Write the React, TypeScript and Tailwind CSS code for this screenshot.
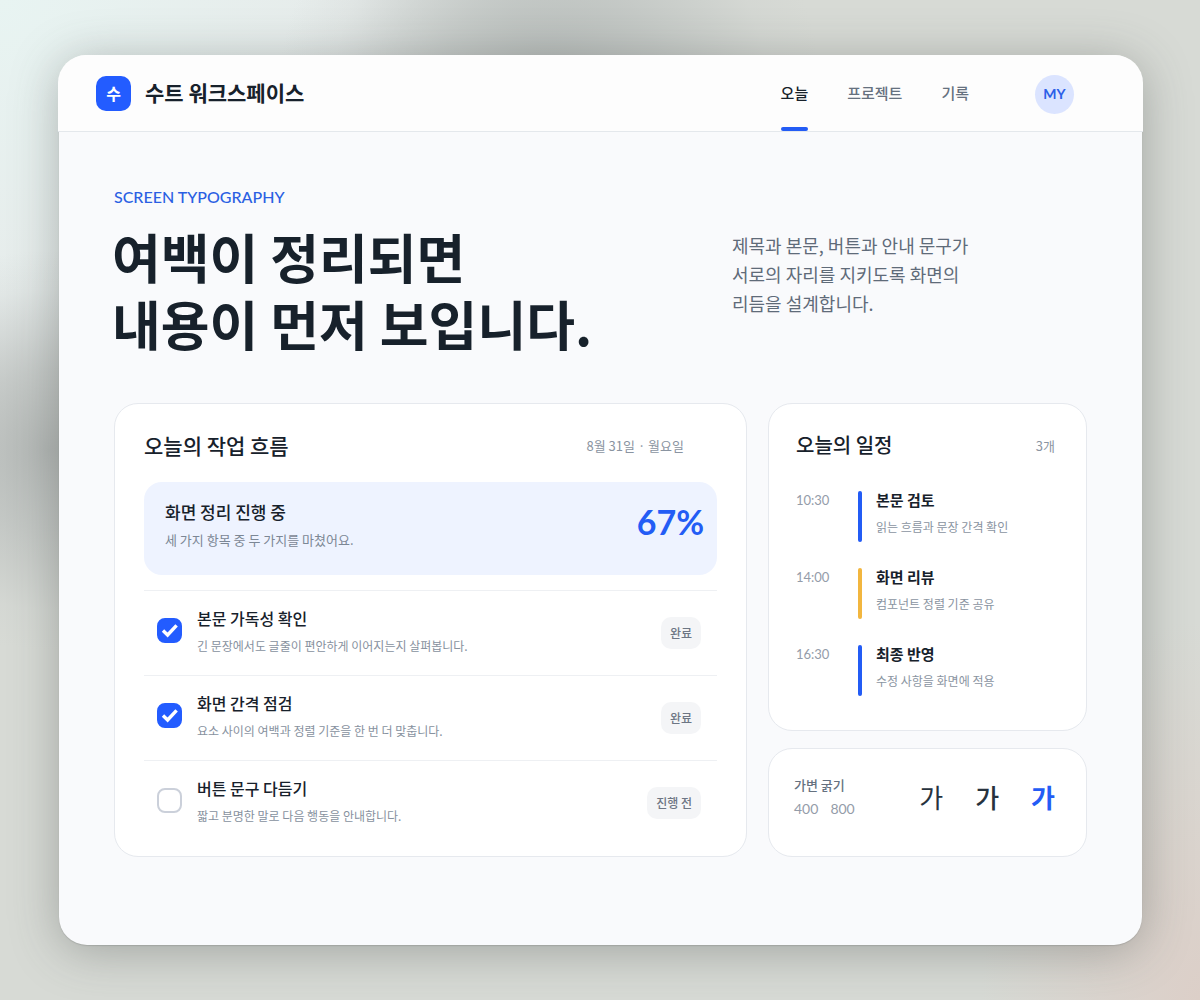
import { useState } from "react";
import clsx from "clsx";

const navItems = [
  { label: "오늘", active: true },
  { label: "프로젝트", active: false },
  { label: "기록", active: false },
];

const initialTasks = [
  { id: "readability", title: "본문 가독성 확인", desc: "긴 문장에서도 글줄이 편안하게 이어지는지 살펴봅니다.", status: "완료", done: true },
  { id: "spacing", title: "화면 간격 점검", desc: "요소 사이의 여백과 정렬 기준을 한 번 더 맞춥니다.", status: "완료", done: true },
  { id: "copy", title: "버튼 문구 다듬기", desc: "짧고 분명한 말로 다음 행동을 안내합니다.", status: "진행 전", done: false },
];

const events = [
  { time: "10:30", title: "본문 검토", desc: "읽는 흐름과 문장 간격 확인", bar: "bg-[#235cf5]" },
  { time: "14:00", title: "화면 리뷰", desc: "컴포넌트 정렬 기준 공유", bar: "bg-[#f2b63f]" },
  { time: "16:30", title: "최종 반영", desc: "수정 사항을 화면에 적용", bar: "bg-[#235cf5]" },
];

const Header = () => (
  <header className="-mx-px flex h-[77px] items-stretch justify-between rounded-t-[28px] border-b border-[#e4e8ec] bg-[#fdfdfd] pl-[38px] pr-[69px]">
    <div className="flex items-center gap-[14px]">
      <div className="flex size-[35px] items-center justify-center rounded-[10px] bg-[#235cff] text-base font-bold text-white">수</div>
      <span className="text-[21px] font-bold text-[#17212b]">수트 워크스페이스</span>
    </div>
    <div className="flex items-center gap-[66px]">
      <nav className="flex gap-[39px] self-stretch text-[15px] font-medium">
        {navItems.map((item) => (
          <a
            key={item.label}
            href="#"
            className={clsx("flex flex-col", item.active ? "text-[#17212b]" : "text-[#66717f]")}
          >
            <span className="flex flex-1 items-center pt-1">{item.label}</span>
            <span className={clsx("h-1 rounded-full", item.active && "bg-[#235cf5]")} />
          </a>
        ))}
      </nav>
      <button className="mt-0.5 size-[39px] rounded-full bg-[#dbe4ff] font-[Lato] text-sm font-bold text-[#2c5fe8]">MY</button>
    </div>
  </header>
);

const Hero = () => (
  <section className="grid grid-cols-[633fr_319fr] gap-x-[21px]">
    <div>
      <p className="font-[Lato] text-base leading-6 font-medium text-[#2b5fe3]">SCREEN TYPOGRAPHY</p>
      <h1 className="mt-[14px] -ml-0.5 text-[53px] leading-[67px] font-bold whitespace-nowrap text-[#17212b]">
        여백이 정리되면
        <br />
        내용이 먼저 보입니다.
      </h1>
    </div>
    <p className="-ml-9 pt-[46px] text-lg leading-[29px] text-[#5f6b79]">
      제목과 본문, 버튼과 안내 문구가
      <br />
      서로의 자리를 지키도록 화면의
      <br />
      리듬을 설계합니다.
    </p>
  </section>
);

const TaskCard = () => {
  const [tasks, setTasks] = useState(initialTasks);

  const toggle = (id: string) =>
    setTasks((prev) => prev.map((t) => (t.id === id ? { ...t, done: !t.done, status: t.done ? "진행 전" : "완료" } : t)));

  return (
    <section className="rounded-3xl border border-[#e6e9ee] bg-white px-[29px] pt-[25px] pb-[11px]">
      <div className="flex items-center justify-between pr-[33px]">
        <h2 className="text-[21px] leading-8 font-medium text-[#17212b]">오늘의 작업 흐름</h2>
        <time className="pt-0.5 text-[13px] text-[#8a94a1]">8월 31일 · 월요일</time>
      </div>

      <div className="mt-[21px] flex h-[93px] justify-between rounded-[18px] bg-[#eef3ff] pt-4 pr-[13px] pl-[21px]">
        <div>
          <h3 className="text-[17px] leading-7 font-medium text-[#17212b]">화면 정리 진행 중</h3>
          <p className="mt-0.5 text-[13px] leading-6 text-[#7c8795]">세 가지 항목 중 두 가지를 마쳤어요.</p>
        </div>
        <strong className="font-[Lato] text-[34px] leading-[48px] font-bold text-[#235cf5]">67%</strong>
      </div>

      <ul className="mt-[15px]">
        {tasks.map((task) => (
          <li key={task.id} className="flex h-[85px] items-start border-t border-[#eef0f3] pr-4 pl-[13px]">
            <span className="relative mt-[27px] flex size-[25px] shrink-0">
              <input
                id={task.id}
                type="checkbox"
                checked={task.done}
                onChange={() => toggle(task.id)}
                className="size-[25px] appearance-none rounded-lg border-2 border-[#cbd0da] bg-white checked:border-[#235cff] checked:bg-[#235cff]"
              />
              {task.done && (
                <svg viewBox="0 0 25 25" className="pointer-events-none absolute inset-0" fill="none" stroke="white" strokeWidth="3.4">
                  <path d="M6 12.6 L10.6 17 L19.6 7.4" />
                </svg>
              )}
            </span>
            <label htmlFor={task.id} className="mt-[15px] ml-[15px] flex-1">
              <span className="block text-base leading-6 font-medium text-[#17212b]">{task.title}</span>
              <span className="mt-1 block text-xs leading-6 text-[#87919e]">{task.desc}</span>
            </label>
            <span className="mt-[26px] rounded-[10px] bg-[#f4f5f7] px-[9px] text-xs leading-8 font-medium text-[#6d7684]">{task.status}</span>
          </li>
        ))}
      </ul>
    </section>
  );
};

const ScheduleCard = () => (
  <section className="rounded-3xl border border-[#e6e9ee] bg-white px-[27px] pt-[25px] pb-[34px]">
    <div className="flex items-center justify-between pr-1">
      <h2 className="text-xl leading-8 font-medium text-[#17212b]">오늘의 일정</h2>
      <span className="pt-0.5 text-[13px] text-[#8a94a1]">3개</span>
    </div>
    <ul className="mt-[30px] flex flex-col gap-[26px]">
      {events.map((event) => (
        <li key={event.time} className="flex h-[51px]">
          <time className="w-[62px] font-[Lato] text-[13px] leading-[19px] text-[#949ca9]">{event.time}</time>
          <span className={clsx("w-1 rounded-full", event.bar)} />
          <div className="-mt-1 ml-[14px]">
            <h3 className="text-[15px] leading-[26px] font-bold text-[#17212b]">{event.title}</h3>
            <p className="mt-0.5 text-xs leading-6 text-[#8a94a1]">{event.desc}</p>
          </div>
        </li>
      ))}
    </ul>
  </section>
);

const WeightCard = () => (
  <section className="flex flex-1 items-start justify-between rounded-3xl border border-[#e6e9ee] bg-white px-[25px] pt-6">
    <div>
      <h3 className="text-[13px] leading-6 font-medium text-[#66717f]">가변 굵기</h3>
      <p className="flex gap-3 font-[Lato] text-sm leading-6 text-[#949ca9]">
        <span>400</span>
        <span>800</span>
      </p>
    </div>
    <div className="flex gap-8 pt-1 pr-[6px] text-[26px] leading-10 text-[#27323e]">
      <span>가</span>
      <span className="font-medium">가</span>
      <span className="font-bold text-[#235cf5]">가</span>
    </div>
  </section>
);

const App = () => {
  return (
    <div className="flex min-h-screen bg-[#d7dad5] bg-[radial-gradient(ellipse_270px_240px_at_550px_80px,#b6bbb9,#bcc1bfb3_40%,#c8cdcb33_80%,transparent),radial-gradient(ellipse_230px_200px_at_50px_450px,#b4b8b6,#babebcb3_40%,#c8cdcb33_80%,transparent),radial-gradient(ellipse_600px_560px_at_0%_0%,#e8f4f2,#e6ebea_60%,#dce1de80_85%,transparent),radial-gradient(ellipse_220px_380px_at_100%_100%,#dccfc8,transparent)] pt-[55px] pr-[58px] pb-[55px] pl-[59px] font-['Noto_Sans_CJK_KR',sans-serif]">
      <div className="flex-1 rounded-[28px] bg-[#f9fafc] shadow-[0_1px_1px_rgba(80,86,84,0.2),0_6px_48px_rgba(70,76,74,0.38)]">
        <Header />
        <main className="px-[55px] pt-[53px] pb-[88px]">
          <Hero />
          <div className="mt-[46px] grid grid-cols-[633fr_319fr] gap-[21px]">
            <TaskCard />
            <div className="flex flex-col gap-[17px]">
              <ScheduleCard />
              <WeightCard />
            </div>
          </div>
        </main>
      </div>
    </div>
  );
};

export default App;
